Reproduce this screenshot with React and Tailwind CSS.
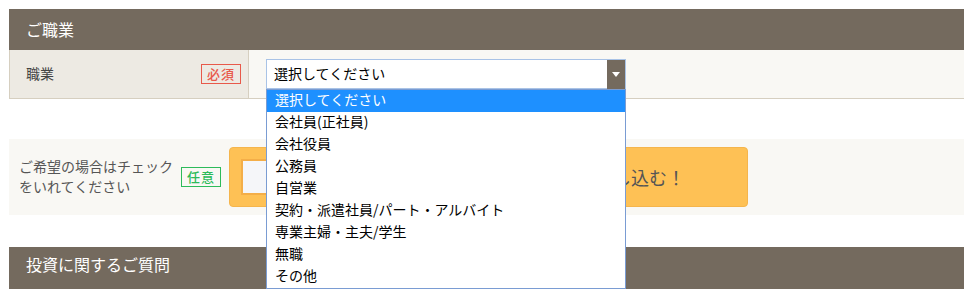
import React from "react";

const items = [
  "選択してください",
  "会社員(正社員)",
  "会社役員",
  "公務員",
  "自営業",
  "契約・派遣社員/パート・アルバイト",
  "専業主婦・主夫/学生",
  "無職",
  "その他",
];

export default function App() {
  return (
    <div
      className="w-[964px] h-[289px] overflow-hidden bg-white pl-[9px] pt-[9px]"
      style={{ fontFamily: '"Noto Sans CJK JP", "Noto Sans", sans-serif' }}
    >
      <div className="h-[41px] bg-[#746a5e] text-white text-[16px] pl-[17px] pb-[2px] flex items-center">
        ご職業
      </div>
      <div className="flex h-[49px] border-l border-b border-[#d6cfc0]">
        <div className="w-[239px] bg-[#edeae3] border-r border-[#d6cfc0] flex items-center justify-between pl-[16px] pr-[7px] text-[14px] text-[#444]">
          <span className="pb-[2px]">職業</span>
          <span className="h-[20px] w-[40px] border border-[#e8594a] text-[#e8594a] text-[13px] font-medium flex items-center justify-center leading-none tracking-[1px] pb-[1px]">
            必須
          </span>
        </div>
        <div className="flex-1 bg-[#f9f8f4] pl-[17px] pt-[9px] relative">
          <div className="w-[360px] h-[30px] border border-[#a9c3e6] bg-white flex items-center justify-between">
            <span className="pl-[7px] pb-[2px] text-[14px] text-black">選択してください</span>
            <span className="w-[18px] h-[29px] bg-[#746a5e] flex items-center justify-center">
              <svg width="8" height="5" viewBox="0 0 8 5">
                <path d="M0 0H8L4 5Z" fill="#fff" />
              </svg>
            </span>
          </div>
          <div className="absolute left-[17px] top-[39px] w-[360px] border border-[#7a9cd3] bg-white z-10">
            {items.map((t, i) => (
              <div
                key={t}
                className={
                  "h-[22px] flex items-center pl-[8px] pb-[3px] text-[14px] whitespace-nowrap " +
                  (i === 0 ? "bg-[#1e90ff] text-white" : "text-black")
                }
              >
                {t}
              </div>
            ))}
          </div>
        </div>
      </div>
      <div className="h-[40px]" />
      <div className="h-[76px] bg-[#f9f8f4] flex items-center pl-[10px]">
        <div className="text-[14px] leading-[20px] text-[#555] w-[162px] pb-[2px]">
          ご希望の場合はチェック
          <br />
          をいれてください
        </div>
        <span className="h-[20px] w-[40px] border border-[#2dbb5a] text-[#2dbb5a] text-[13px] font-medium flex items-center justify-center leading-none tracking-[1px] pb-[1px]">
          任意
        </span>
        <div className="ml-[8px] w-[519px] h-[60px] bg-[#fec155] border border-[#f5b54c] rounded-[4px] flex items-center pl-[11px]">
          <div className="w-[36px] h-[36px] border-2 border-[#f4ae48] bg-[#f5f6f9]" />
          <div className="flex-1 text-right pr-[62px] text-[18px] text-[#555]">
            メールマガジンに申し込む！
          </div>
        </div>
      </div>
      <div className="h-[32px]" />
      <div className="h-[42px] bg-[#746a5e] text-white text-[16px] pl-[17px] pb-[8px] flex items-center">
        投資に関するご質問
      </div>
    </div>
  );
}
